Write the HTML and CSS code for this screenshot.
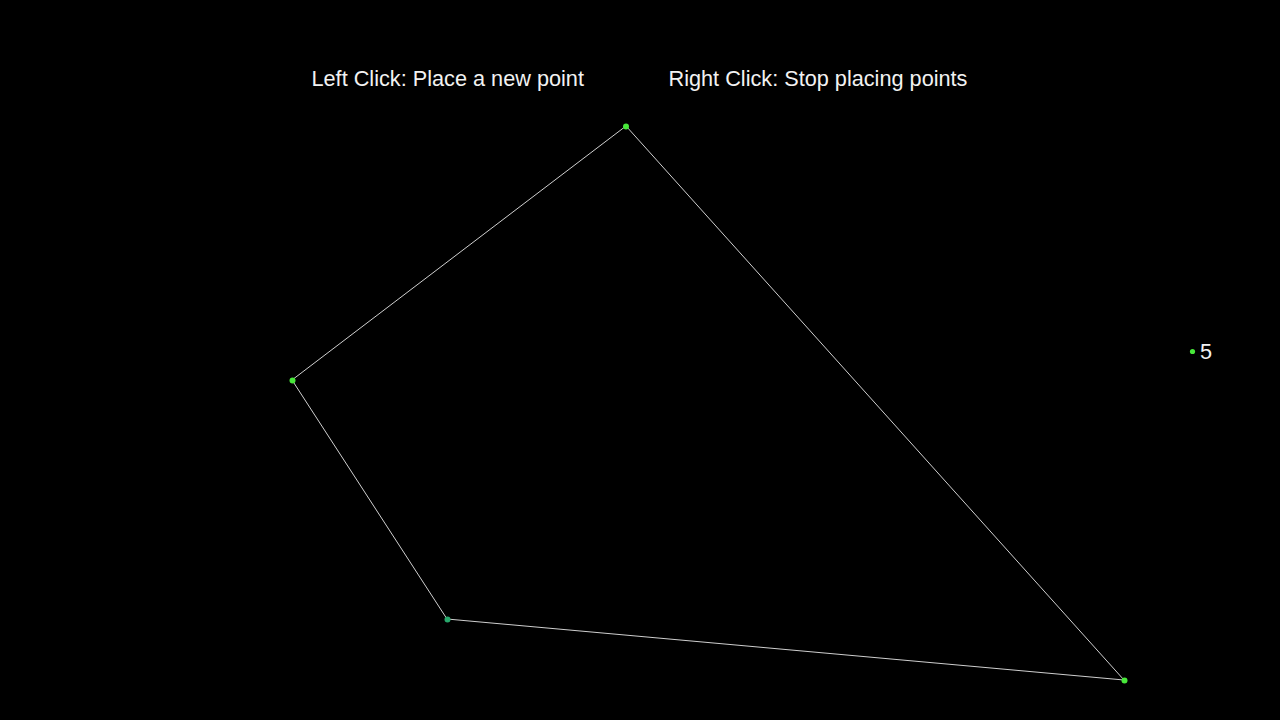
FILE: index.html
```html
<!DOCTYPE html>
<html>
<head>
<meta charset="utf-8">
<link rel="stylesheet" href="styles.css">
</head>
<body>
<svg class="canvas" width="1280" height="720" viewBox="0 0 1280 720">
  <text class="hint" x="311.5" y="86">Left Click: Place a new point</text>
  <text class="hint" x="668.5" y="86">Right Click: Stop placing points</text>
  <polygon class="edge" points="626,126 292,380 447,619 1124,680"/>
  <circle class="pt" cx="626" cy="126.5" r="3"/>
  <circle class="pt" cx="292.5" cy="380.5" r="3"/>
  <circle class="pt pt-teal" cx="447.5" cy="619.5" r="3"/>
  <circle class="pt" cx="1124.5" cy="680.5" r="3"/>
  <circle class="pt" cx="1192.5" cy="351.5" r="2.6"/>
  <text class="count" x="1200" y="359">5</text>
</svg>
</body>
</html>
```
FILE: styles.css
```css
html, body {
  margin: 0;
  padding: 0;
  background: #000;
  overflow: hidden;
}
.canvas {
  display: block;
}
.hint, .count {
  font-family: "Liberation Sans", Arial, sans-serif;
  font-size: 21.7px;
  fill: #f2f2f2;
}
.edge {
  fill: none;
  stroke: #cfcfcf;
  stroke-width: 1;
}
.pt {
  fill: #48e83a;
}
.pt-teal {
  fill: #28a86c;
}
```
